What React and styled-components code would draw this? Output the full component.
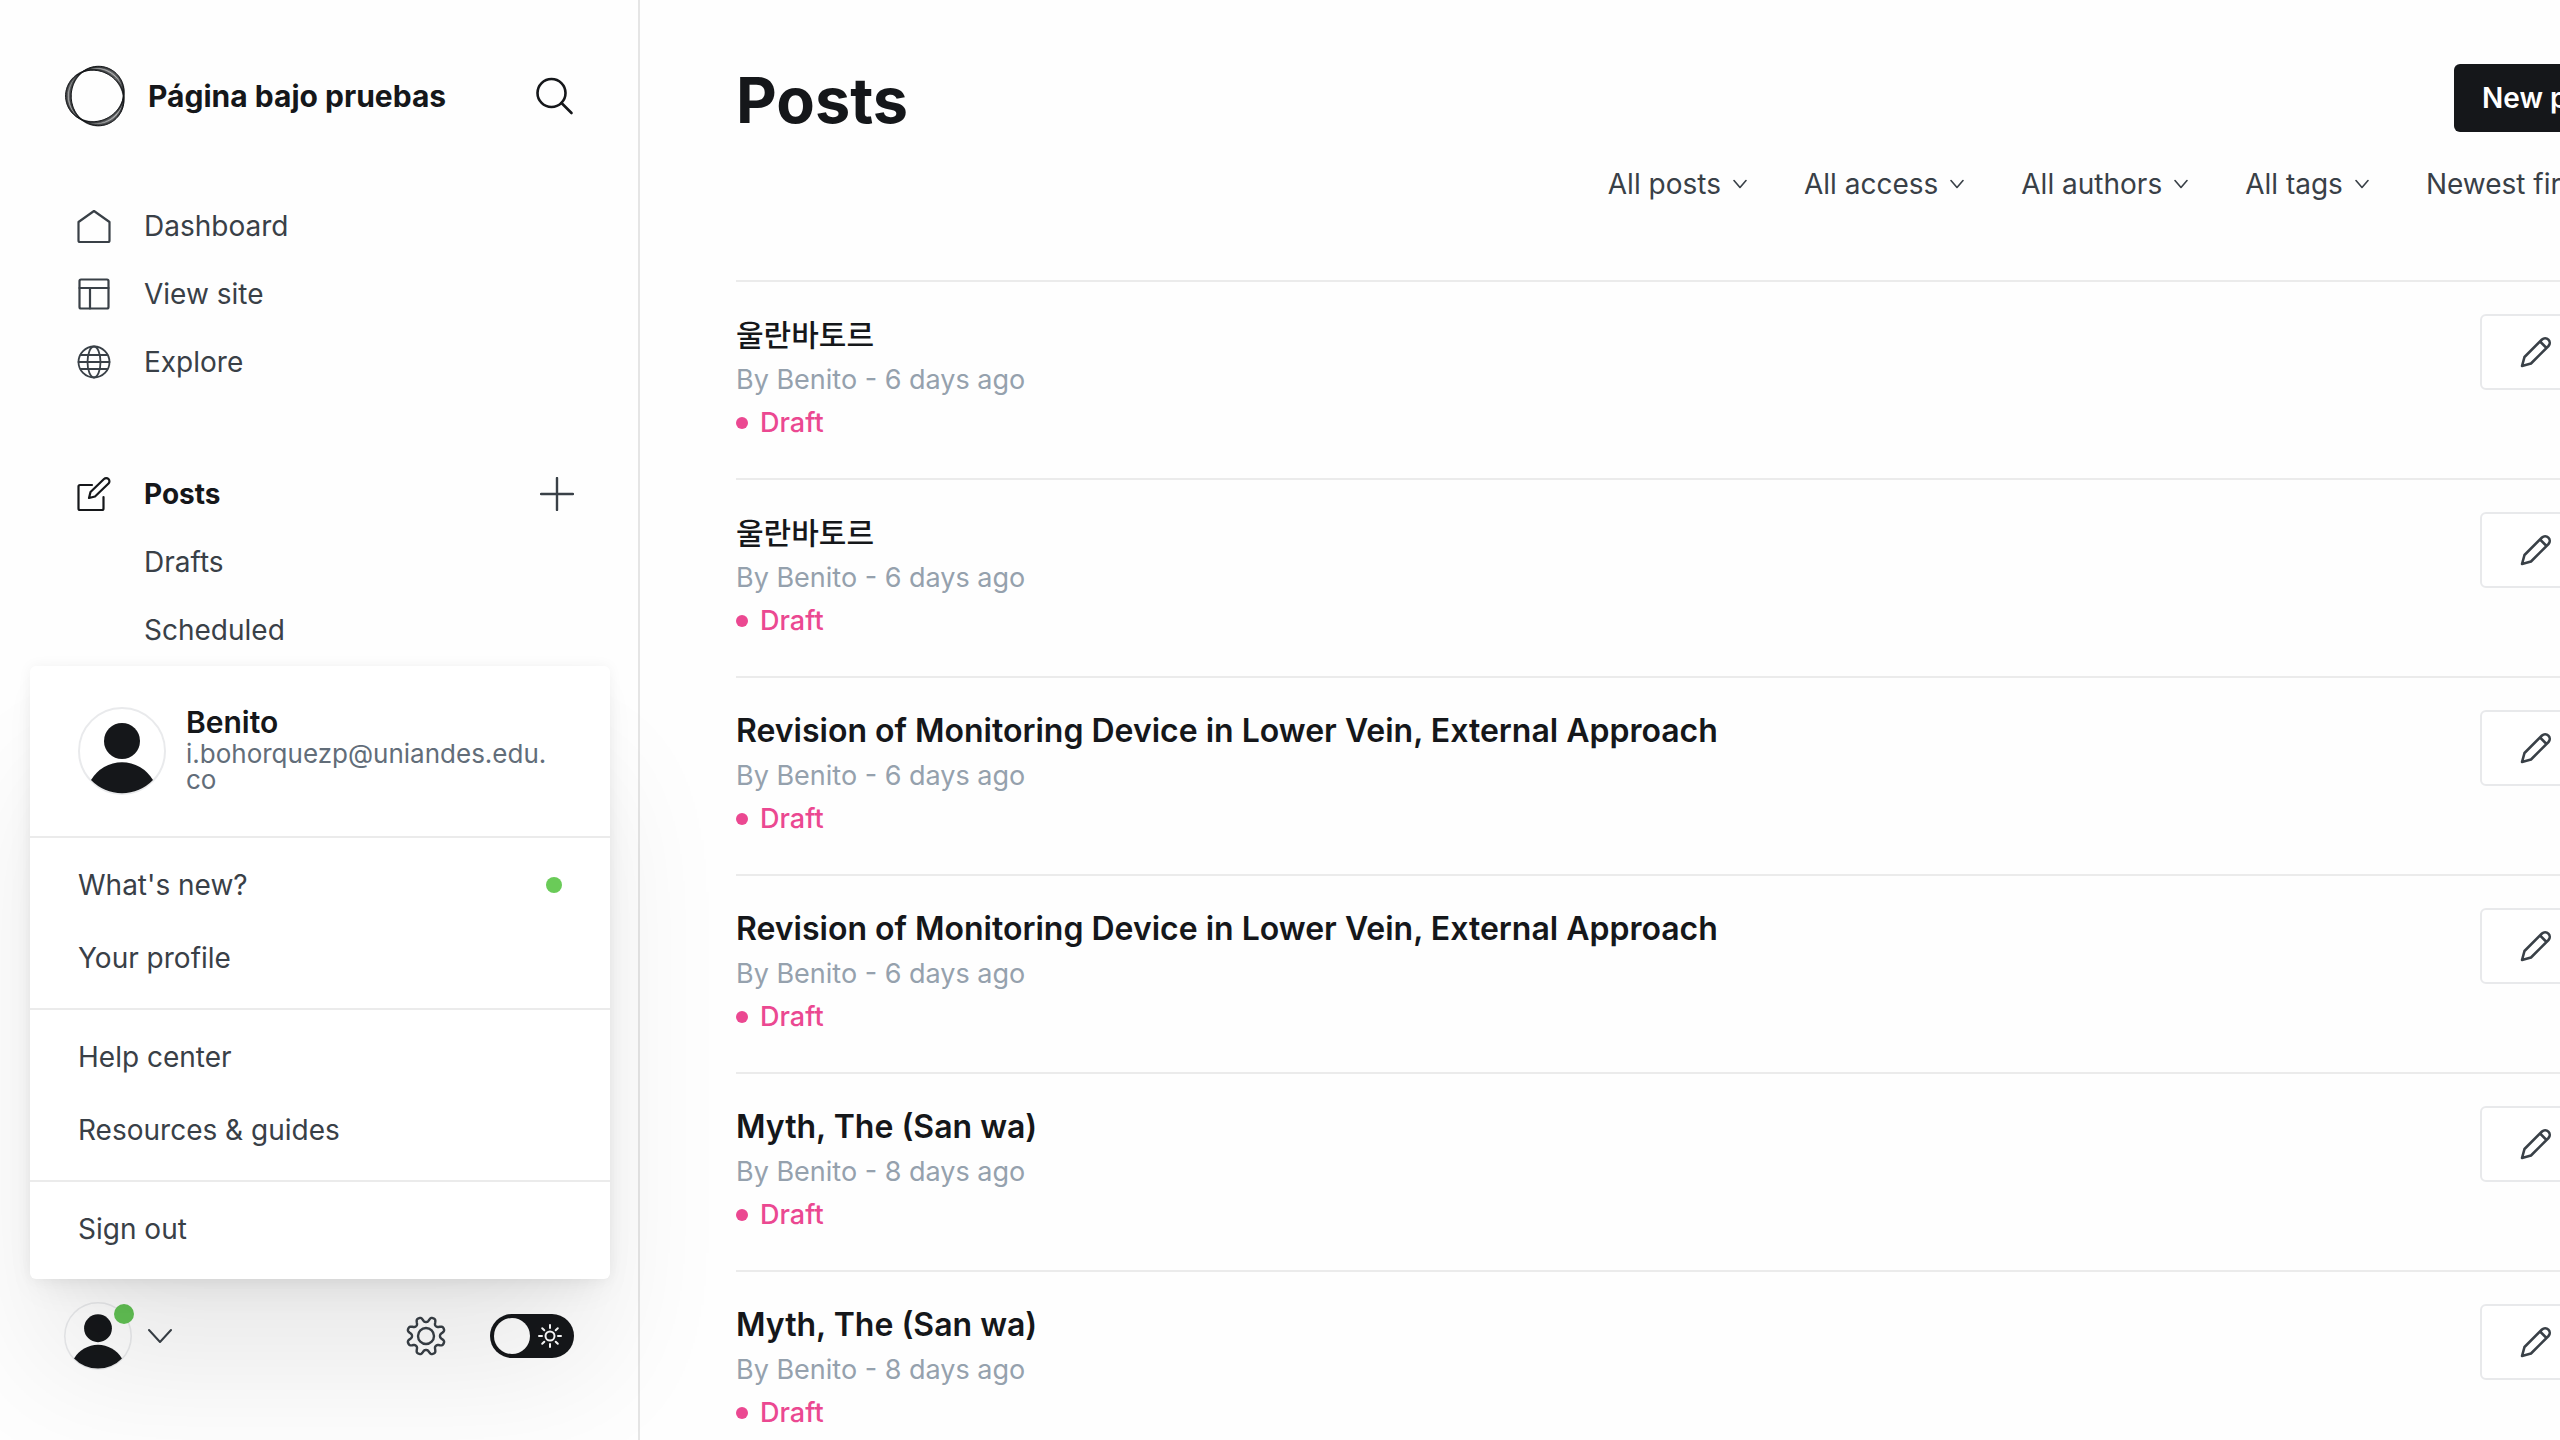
import React from 'react';
import styled, { createGlobalStyle, css } from 'styled-components';

const ink = '#15171a';
const slate = '#394047';
const line = '#ebebeb';

const Global = createGlobalStyle`
  *, *::before, *::after { box-sizing: border-box; }
  body {
    margin: 0;
    background: #fefefe;
    color: ${slate};
    font-family: Inter, "Noto Sans CJK KR", sans-serif;
    font-size: 28px;
    line-height: 44px;
    overflow: hidden;
  }
  button { font: inherit; color: inherit; border: 0; background: none; padding: 0; cursor: pointer; }
  a { color: inherit; text-decoration: none; }
  h1, h2, h3, p, ul { margin: 0; padding: 0; }
  ul { list-style: none; }
  svg { display: block; flex: none; }
`;

const Shell = styled.div`
  display: grid;
  grid-template-columns: 640px minmax(0, 1fr);
  height: 100vh;
  overflow: hidden;
`;

const Sidebar = styled.aside`
  position: relative;
  display: flex;
  flex-direction: column;
  border-right: 2px solid #e5e5e5;
`;

const Brand = styled.header`
  display: flex;
  align-items: center;
  gap: 20px;
  padding: 64px 64px 0;
`;

const SiteName = styled.h2`
  flex: 1;
  font-size: 30px;
  font-weight: 700;
  line-height: 64px;
  color: ${ink};
`;

const Nav = styled.nav`
  display: flex;
  flex-direction: column;
  gap: 64px;
  padding: 64px 64px 0 76px;
`;

const NavRow = styled.li`
  display: flex;
  align-items: center;
  height: 68px;
`;

const NavLink = styled.a`
  flex: 1;
  display: flex;
  align-items: center;
  gap: 32px;
  ${(p) => p.$active && css`
    font-weight: 700;
    color: ${ink};
  `}
  ${(p) => p.$sub && css`padding-left: 68px;`}
`;

const Footer = styled.footer`
  margin-top: auto;
  display: flex;
  align-items: center;
  padding: 0 64px 70px;
`;

const ProfileButton = styled.button`
  flex: 1;
  display: flex;
  align-items: center;
  gap: 16px;
`;

const AvatarWrap = styled.span`
  position: relative;
  display: block;
`;

const Dot = styled.span`
  flex: none;
  width: ${(p) => p.$size}px;
  height: ${(p) => p.$size}px;
  border-radius: 50%;
  background: ${(p) => p.$color};
`;

const Badge = styled(Dot)`
  position: absolute;
  top: 2px;
  right: -2px;
`;

const Tools = styled.div`
  display: flex;
  align-items: center;
  gap: 44px;
`;

const Toggle = styled.label`
  display: flex;
  align-items: center;
  justify-content: space-between;
  width: 84px;
  height: 44px;
  padding: 4px 12px 4px 4px;
  border-radius: 22px;
  background: ${ink};
  color: #fff;
  cursor: pointer;
`;

const ToggleInput = styled.input`
  appearance: none;
  margin: 0;
  width: 36px;
  height: 36px;
  border-radius: 50%;
  background: #fff;
`;

const Popover = styled.div`
  position: absolute;
  z-index: 2;
  left: 30px;
  bottom: 161px;
  width: 580px;
  border-radius: 6px;
  background: #fff;
  box-shadow: 0 0 14px rgba(0, 0, 0, 0.05), 0 16px 32px -10px rgba(0, 0, 0, 0.08),
    0 100px 130px -16px rgba(0, 0, 0, 0.09);
`;

const Account = styled.div`
  display: flex;
  align-items: center;
  gap: 20px;
  padding: 36px 48px;
  height: 170px;
`;

const AccountText = styled.div`
  flex: 1;
  min-width: 0;
  padding-bottom: 6px;
`;

const AccountName = styled.h3`
  font-size: 30px;
  font-weight: 600;
  line-height: 38px;
  color: ${ink};
`;

const Email = styled.p`
  font-size: 26px;
  line-height: 26px;
  color: #626d79;
`;

const MenuGroup = styled.ul`
  border-top: 2px solid ${line};
  padding: 10px 0 14px;
`;

const MenuLink = styled.a`
  display: flex;
  align-items: center;
  justify-content: space-between;
  height: 73px;
  padding: 0 48px;
`;

const Main = styled.main`
  min-width: 0;
  overflow: hidden;
  padding: 64px 0 0 96px;
`;

/* The content column keeps a minimum width and runs past the right edge. */
const Content = styled.div`
  min-width: 1920px;
`;

const TitleBar = styled.div`
  display: flex;
  align-items: center;
  justify-content: space-between;
  height: 72px;
`;

const Title = styled.h1`
  font-size: 63px;
  font-weight: 700;
  line-height: 72px;
  color: ${ink};
`;

const NewPost = styled.button`
  align-self: flex-start;
  height: 68px;
  width: 202px;
  padding: 0 28px;
  border-radius: 6px;
  background: ${ink};
  color: #fff;
  font-weight: 600;
  text-align: left;
  white-space: nowrap;
`;

const Filters = styled.div`
  display: flex;
  justify-content: flex-end;
  gap: 57px;
  padding: 24px 45px 72px 0;
`;

const Filter = styled.button`
  display: flex;
  align-items: center;
  gap: 12px;
  height: 48px;
  white-space: nowrap;
`;

const PostRow = styled.li`
  display: grid;
  grid-template-columns: minmax(0, 1fr) 176px;
  align-items: start;
  height: 198px;
  padding: 32px 0 0;
  border-top: 2px solid ${line};
`;

const PostTitle = styled.h3`
  font-size: 32px;
  font-weight: 600;
  line-height: 42px;
  color: ${ink};

  &:lang(ko) {
    font-size: 30px;
    font-weight: 500;
  }
`;

const Byline = styled.p`
  font-size: 27px;
  line-height: 48px;
  color: #95a1ad;
`;

const Status = styled.p`
  display: flex;
  align-items: center;
  gap: 12px;
  font-size: 27px;
  font-weight: 500;
  line-height: 38px;
  color: #eb4891;
`;

const EditButton = styled.button`
  display: flex;
  align-items: center;
  justify-content: center;
  width: 112px;
  height: 76px;
  border: 2px solid #e8e9eb;
  border-radius: 6px;
  background: #fff;
`;

const Svg = ({ size = 32, box = 24, sw = 1.5, children, ...rest }) => (
  <svg width={size} height={size} viewBox={`0 0 ${box} ${box}`} fill="none" stroke="currentColor"
    strokeWidth={sw} strokeLinecap="round" strokeLinejoin="round" aria-hidden="true" {...rest}>
    {children}
  </svg>
);

/* A ring of loops that cross at three points; each loop takes two turns to close. */
const loop = (t) => {
  const pts = [];
  for (let i = 0; i < 240; i++) {
    const a = (i / 240) * Math.PI * 4;
    const r = 27.6 + t * 2.8 * Math.sin(1.5 * a);
    pts.push(`${(32 + r * Math.cos(a)).toFixed(2)} ${(32 - r * Math.sin(a)).toFixed(2)}`);
  }
  return `M${pts.join('L')}Z`;
};
const Logo = () => (
  <svg width="64" height="64" viewBox="0 0 64 64" fill="none" stroke={ink} aria-hidden="true">
    <path d={loop(1)} fill="#77787a" fillOpacity="0.55" fillRule="evenodd" strokeWidth="1" />
    {[0.8, 0.55, 0.3].map((t) => (
      <path key={t} d={loop(t)} strokeWidth="0.7" opacity="0.6" transform="rotate(-5 32 32)" />
    ))}
    {[0.95, 0.65].map((t) => (
      <path key={t} d={loop(t)} strokeWidth="0.7" opacity="0.6" transform="rotate(8 32 32)" />
    ))}
  </svg>
);

const SearchIcon = () => (
  <Svg size={38} box={38} sw={2.6} color={ink}>
    <circle cx="15.5" cy="16" r="14" /><path d="M25.500 26l10 10" />
  </Svg>
);
const HomeIcon = () => (
  <Svg size={36} box={36} sw={2.2}><path d="M2.500 14L18 3 33.500 14v18.500a1.500 1.500 0 0 1-1.500 1.500H4a1.500 1.500 0 0 1-1.500-1.500z" /></Svg>
);
const LayoutIcon = () => (
  <Svg size={36} box={36} sw={2.2}><rect x="3.500" y="3.500" width="29" height="29" rx="1.500" /><path d="M3.500 12h29M14 12v20.500" /></Svg>
);
const GlobeIcon = () => (
  <Svg size={36} box={36} sw={1.8}>
    <circle cx="18" cy="18" r="15.500" /><ellipse cx="18" cy="18" rx="6.500" ry="15.500" /><path d="M2.500 18h31M4.500 11h27M4.500 25h27" />
  </Svg>
);
const ComposeIcon = () => (
  <Svg size={36} box={36} sw={2.2}>
    <path d="M16 9H4a1.500 1.500 0 0 0-1.500 1.500v22A1.500 1.500 0 0 0 4 34h22a1.500 1.500 0 0 0 1.500-1.500V21" />
    <path d="M13 22l1.500-6L28 3a3 3 0 0 1 4.500 4.500L19 20.500z" />
  </Svg>
);
const PlusIcon = () => <Svg size={34} box={34} sw={2.4}><path d="M17 1v32M1 17h32" /></Svg>;
const Chevron = ({ size = 14, sw = 1.6 }) => (
  <Svg size={size} box={size} sw={sw}>
    <path d={`M1 ${size * 0.25}L${size / 2} ${size * 0.75} ${size - 1} ${size * 0.25}`} />
  </Svg>
);
const PencilIcon = () => (
  <Svg size={32} box={32} sw={2.6}><path d="M2 30l2.500-9L22 3.500a4.600 4.600 0 0 1 6.500 6.500L11 27.500zM20 5.500l6.500 6.500" /></Svg>
);
const gear = (() => {
  const n = 8;
  const pts = [];
  for (let i = 0; i < n * 24; i++) {
    const a = (i / (n * 24)) * Math.PI * 2;
    const w = Math.tanh(1.6 * Math.cos(n * a)) / Math.tanh(1.6);
    const r = 16.6 + 2.6 * w;
    pts.push(`${(20 + r * Math.sin(a + Math.PI / 8)).toFixed(2)} ${(20 - r * Math.cos(a + Math.PI / 8)).toFixed(2)}`);
  }
  return `M${pts.join('L')}Z`;
})();
const GearIcon = () => <Svg size={40} box={40} sw={2.4}><path d={gear} /><circle cx="20" cy="20" r="8" /></Svg>;
const SunIcon = () => (
  <Svg size={24} box={24} sw={2}>
    <circle cx="12" cy="12" r="4.500" />
    <path d="M12 1v3M12 20v3M1 12h3M20 12h3M4.200 4.200l2.100 2.100M17.700 17.700l2.100 2.100M4.200 19.800l2.100-2.100M17.700 6.300l2.100-2.100" />
  </Svg>
);
const Avatar = ({ size }) => (
  <svg width={size} height={size} viewBox="0 0 88 88" aria-hidden="true">
    <circle cx="44" cy="44" r="43" fill="none" stroke="#e9eaec" strokeWidth="2" />
    <circle cx="44" cy="34" r="18" fill={ink} />
    <path d="M13 73a36 36 0 0 1 62 0 43 43 0 0 1-62 0z" fill={ink} />
  </svg>
);

const navLinks = [
  ['Dashboard', HomeIcon],
  ['View site', LayoutIcon],
  ['Explore', GlobeIcon],
];
const menu = [["What's new?", 'Your profile'], ['Help center', 'Resources & guides'], ['Sign out']];
const filters = ['All posts', 'All access', 'All authors', 'All tags', 'Newest first'];
const revision = 'Revision of Monitoring Device in Lower Vein, External Approach';
const posts = [
  ['울란바토르', 6, 'ko'],
  ['울란바토르', 6, 'ko'],
  [revision, 6, 'en'],
  [revision, 6, 'en'],
  ['Myth, The (San wa)', 8, 'en'],
  ['Myth, The (San wa)', 8, 'en'],
];

export default function App() {
  return (
    <Shell>
      <Global />
      <Sidebar>
        <Brand>
          <Logo />
          <SiteName>Página bajo pruebas</SiteName>
          <button aria-label="Search"><SearchIcon /></button>
        </Brand>
        <Nav>
          <ul>
            {navLinks.map(([label, Icon]) => (
              <NavRow key={label}><NavLink href="#"><Icon />{label}</NavLink></NavRow>
            ))}
          </ul>
          <ul>
            <NavRow>
              <NavLink href="#" $active><ComposeIcon />Posts</NavLink>
              <button aria-label="New post"><PlusIcon /></button>
            </NavRow>
            <NavRow><NavLink href="#" $sub>Drafts</NavLink></NavRow>
            <NavRow><NavLink href="#" $sub>Scheduled</NavLink></NavRow>
          </ul>
        </Nav>
        <Popover>
          <Account>
            <Avatar size={88} />
            <AccountText>
              <AccountName>Benito</AccountName>
              <Email>i.bohorquezp@uniandes.edu.<wbr />co</Email>
            </AccountText>
          </Account>
          {menu.map((group) => (
            <MenuGroup key={group[0]}>
              {group.map((label) => (
                <li key={label}>
                  <MenuLink href="#">{label}{label === "What's new?" && <Dot $size={16} $color="#6acb58" />}</MenuLink>
                </li>
              ))}
            </MenuGroup>
          ))}
        </Popover>
        <Footer>
          <ProfileButton aria-label="Account menu">
            <AvatarWrap><Avatar size={68} /><Badge $size={20} $color="#62c254" /></AvatarWrap>
            <Chevron size={24} sw={2} />
          </ProfileButton>
          <Tools>
            <button aria-label="Settings"><GearIcon /></button>
            <Toggle><ToggleInput type="checkbox" aria-label="Night shift" /><SunIcon /></Toggle>
          </Tools>
        </Footer>
      </Sidebar>
      <Main>
        <Content>
          <TitleBar>
            <Title>Posts</Title>
            <NewPost>New post</NewPost>
          </TitleBar>
          <Filters>
            {filters.map((f) => <Filter key={f}>{f}<Chevron /></Filter>)}
          </Filters>
          <ul>
            {posts.map(([title, days, lang], i) => (
              <PostRow key={i}>
                <div>
                  <PostTitle lang={lang}>{title}</PostTitle>
                  <Byline>By Benito - {days} days ago</Byline>
                  <Status><Dot $size={12} $color="#eb4891" />Draft</Status>
                </div>
                <EditButton aria-label="Edit post"><PencilIcon /></EditButton>
              </PostRow>
            ))}
          </ul>
        </Content>
      </Main>
    </Shell>
  );
}
